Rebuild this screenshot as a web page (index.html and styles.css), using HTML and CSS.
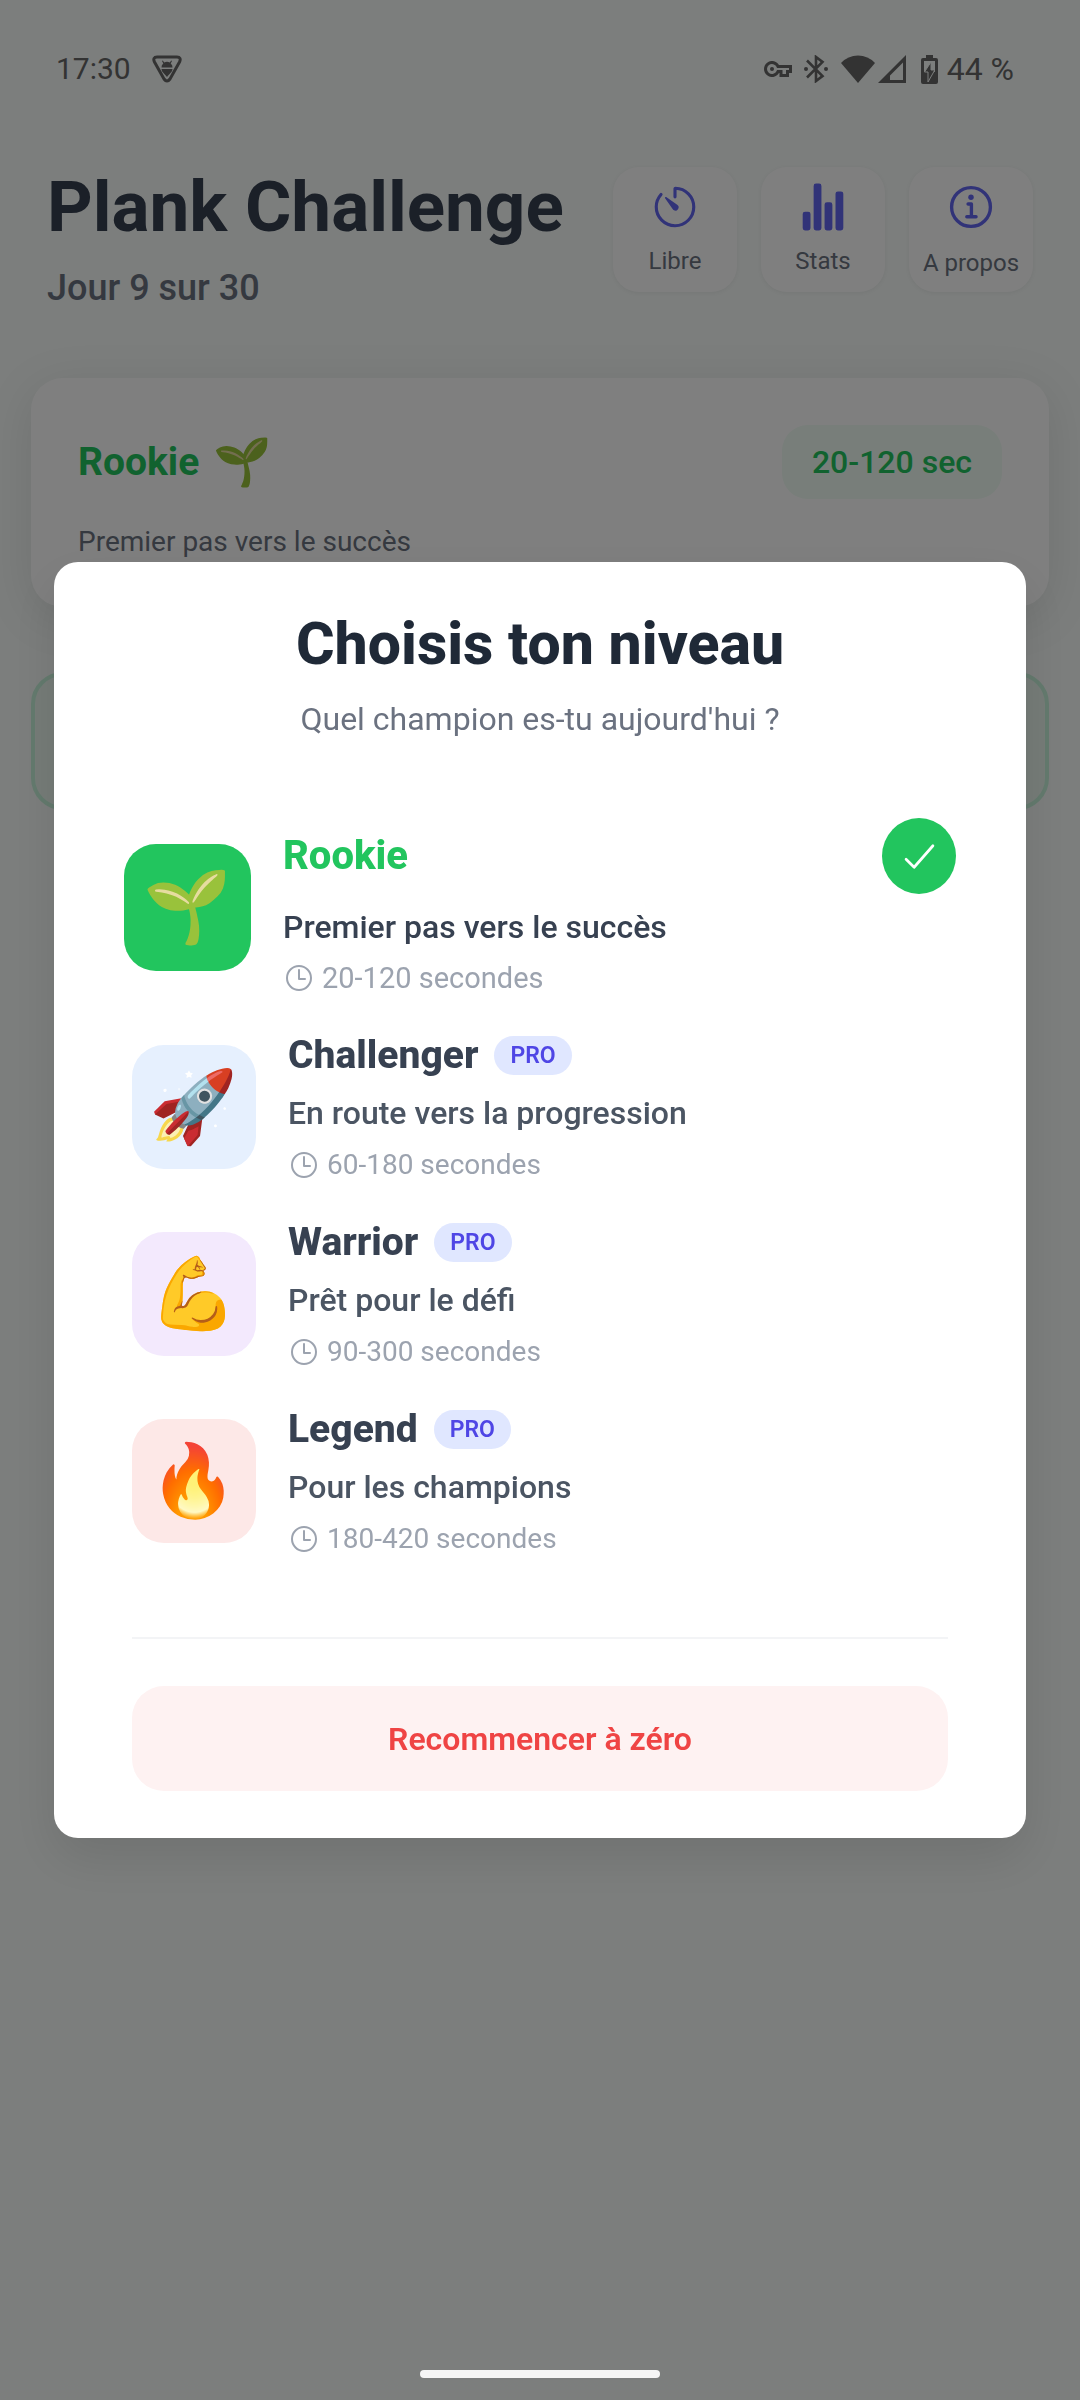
FILE: index.html
```html
<!DOCTYPE html>
<html lang="fr">
<head>
<meta charset="utf-8">
<meta name="viewport" content="width=device-width, initial-scale=1">
<title>Plank Challenge</title>
<link rel="stylesheet" href="styles.css">
</head>
<body>
<svg class="defs" aria-hidden="true">
  <symbol id="clock" viewBox="0 0 512 512"><path fill="none" stroke="currentColor" stroke-width="32" stroke-linecap="round" stroke-linejoin="round" d="M256 64C150 64 64 150 64 256s86 192 192 192 192-86 192-192S362 64 256 64zM256 128v144h96"/></symbol>
</svg>
<div class="screen">
  <div class="status">
    <span>17:30</span>
    <svg class="shield" viewBox="0 0 30 28"><path d="M5 2H25C28 2 29 4 27.500 7L18 24Q15 28 12 24L2.500 7C1 4 2 2 5 2Z" fill="none" stroke="currentColor" stroke-width="3"/><path d="M9.500 12.500a5.500 5 0 0 1 1.800-4L10 6l.8-.5L12.200 7.500a6 6 0 0 1 5.600 0L19.200 5.500l.8.500-1.300 2.500a5.500 5 0 0 1 1.800 4zM9.500 14h11c0 3-3 4.500-5.500 8-2.500-3.500-5.500-5-5.500-8z" fill="currentColor"/></svg>
    <span class="status-right">
      <svg class="s-key" viewBox="0 0 28 16" fill="none" stroke="currentColor" stroke-width="3"><path d="M14 5.500A6.500 6.500 0 1 0 14 10.500H17V14.500H23.500V10.500H26.500V5.500Z"/><circle cx="8" cy="8" r="2" fill="currentColor" stroke="none"/></svg>
      <svg class="s-bt" viewBox="0 0 24 28"><path d="M3 5.500L18.500 21 12 26V2l6.500 5L3 22.500" fill="none" stroke="currentColor" stroke-width="2.600"/><circle cx="2" cy="14" r="2" fill="currentColor"/><circle cx="22" cy="14" r="2" fill="currentColor"/></svg>
      <svg class="s-wifi" viewBox="0 0 34 28" fill="currentColor"><path d="M0 8Q7 .5 17 .5T34 8L17 28Z"/></svg>
      <svg class="s-sig" viewBox="0 0 28 28" fill="currentColor"><path d="M28 0V28H0ZM25 7.500L12 20.500V25H25Z" fill-rule="evenodd"/></svg>
      <svg class="s-bat" viewBox="0 0 17 29" fill="currentColor"><path fill-rule="evenodd" d="M5 0h7v3h3q2 0 2 2v22q0 2-2 2H2q-2 0-2-2V5q0-2 2-2h3zM3 6V17H14V6z"/><path class="bolt" d="M10 7L3.500 17H7V27L13.800 15H10z"/></svg>
      <span class="percent">44 %</span>
    </span>
  </div>

  <header class="header">
    <div class="heading">
      <h1>Plank Challenge</h1>
      <p>Jour 9 sur 30</p>
    </div>
    <nav class="tools">
      <button type="button" class="tool">
        <svg viewBox="0 0 512 512"><path fill="none" stroke="currentColor" stroke-width="32" stroke-linecap="round" stroke-linejoin="round" d="M112.910 128A191.850 191.850 0 0064 254c-1.180 106.350 85.650 193.800 192 194 106.200.2 192-85.830 192-192 0-104.540-83.550-189.610-187.500-192a4.360 4.360 0 00-4.500 4.370V152"/><path fill="currentColor" d="M233.380 278.630l-79-113a8.130 8.130 0 0111.320-11.320l113 79a32.500 32.500 0 01-37.250 53.260 33.210 33.210 0 01-8.070-7.940z"/></svg>
        <span>Libre</span>
      </button>
      <button type="button" class="tool">
        <svg viewBox="0 0 512 512" fill="currentColor"><rect x="48" y="304" width="80" height="192" rx="24"/><rect x="160" y="16" width="80" height="480" rx="24"/><rect x="272" y="208" width="80" height="288" rx="24"/><rect x="384" y="96" width="80" height="400" rx="24"/></svg>
        <span>Stats</span>
      </button>
      <button type="button" class="tool tool-info">
        <svg viewBox="-8 -8 512 512" fill="none" stroke="currentColor" stroke-linecap="round" stroke-linejoin="round"><circle cx="248" cy="248" r="184" stroke-width="32"/><path stroke-width="32" d="M220 220h32v116M208 340h88"/><circle cx="248" cy="156" r="26" fill="currentColor" stroke="none"/></svg>
        <span>A propos</span>
      </button>
    </nav>
  </header>

  <main>
    <section class="card">
      <div class="card-top">
        <h2>Rookie</h2>
        <span class="emoji emoji-small">🌱</span>
        <span class="range">20-120 sec</span>
      </div>
      <p>Premier pas vers le succès</p>
    </section>
    <section class="banner"></section>
  </main>
</div>

<div class="overlay">
  <section class="dialog" role="dialog" aria-modal="true" aria-labelledby="dialog-title">
    <h2 id="dialog-title">Choisis ton niveau</h2>
    <p class="sub">Quel champion es-tu aujourd'hui ?</p>
    <div class="levels">
      <button type="button" class="level selected" aria-pressed="true">
        <span class="tile rookie"><span class="emoji">🌱</span></span>
        <span class="info">
          <span class="name-row"><span class="name">Rookie</span><span class="check"><svg viewBox="0 0 512 512"><path fill="none" stroke="currentColor" stroke-width="32" stroke-linecap="round" stroke-linejoin="round" d="M416 128L192 384l-96-96"/></svg></span></span>
          <span class="desc">Premier pas vers le succès</span>
          <span class="time"><svg><use href="#clock"/></svg>20-120 secondes</span>
        </span>
      </button>
      <button type="button" class="level">
        <span class="tile challenger"><span class="emoji">🚀</span></span>
        <span class="info">
          <span class="name-row"><span class="name">Challenger</span><span class="pro">PRO</span></span>
          <span class="desc">En route vers la progression</span>
          <span class="time"><svg><use href="#clock"/></svg>60-180 secondes</span>
        </span>
      </button>
      <button type="button" class="level">
        <span class="tile warrior"><span class="emoji">💪</span></span>
        <span class="info">
          <span class="name-row"><span class="name">Warrior</span><span class="pro">PRO</span></span>
          <span class="desc">Prêt pour le défi</span>
          <span class="time"><svg><use href="#clock"/></svg>90-300 secondes</span>
        </span>
      </button>
      <button type="button" class="level">
        <span class="tile legend"><span class="emoji">🔥</span></span>
        <span class="info">
          <span class="name-row"><span class="name">Legend</span><span class="pro">PRO</span></span>
          <span class="desc">Pour les champions</span>
          <span class="time"><svg><use href="#clock"/></svg>180-420 secondes</span>
        </span>
      </button>
    </div>
    <div class="footer">
      <button type="button" class="reset">Recommencer à zéro</button>
    </div>
  </section>
  <div class="home-bar"></div>
</div>
</body>
</html>
```
FILE: styles.css
```css
* { box-sizing: border-box; }
body {
  margin: 0;
  background: #f8fcfa;
  font-family: Roboto, "Liberation Sans", sans-serif;
  color: #1f2937;
}
h1, h2, p { margin: 0; }
button {
  border: 0;
  padding: 0;
  background: none;
  font: inherit;
  color: inherit;
  text-align: left;
}
svg { display: block; flex: none; }
.defs { position: absolute; width: 0; height: 0; }
.emoji { font-family: "Noto Color Emoji", sans-serif; font-size: 71px; line-height: 80px; }
.emoji-small { font-size: 47px; line-height: 52px; }

.screen { min-height: 100vh; }
.status {
  display: flex;
  align-items: center;
  height: 138px;
  padding: 0 66px 0 56px;
  font-size: 30px;
  font-weight: 400;
  line-height: 40px;
  color: #666;
}
.percent { font-size: 32px; }
.shield { width: 30px; height: 28px; margin-left: 21px; }
.status-right { display: flex; align-items: center; margin-left: auto; }
.s-key { width: 28px; height: 16px; }
.s-bt { width: 24px; height: 28px; margin-left: 12px; }
.s-wifi { width: 34px; height: 28px; margin-left: 13px; }
.s-sig { width: 28px; height: 28px; margin-left: 3px; }
.s-bat { width: 17px; height: 29px; margin: 0 9px 0 15px; }
.bolt { stroke: #f8fcfa; stroke-width: 1; }

.header {
  display: flex;
  justify-content: space-between;
  align-items: flex-start;
  padding: 29px 47px 0;
}
.heading h1 { font-size: 71px; line-height: 80px; font-weight: 700; color: #374151; }
.heading p { margin-top: 19px; font-size: 36px; line-height: 44px; font-weight: 500; color: #6b7280; }
.tools { display: flex; gap: 24px; }
.tool {
  display: flex;
  flex-direction: column;
  align-items: center;
  justify-content: center;
  gap: 13px;
  width: 124px;
  height: 125px;
  border-radius: 26px;
  background: #fff;
  box-shadow: 0 1px 4px rgba(0, 0, 0, .06);
  color: #6366f1;
}
.tool svg { width: 50px; height: 50px; }
.tool-info svg { width: 54px; height: 54px; }
.tool span { font-size: 24px; line-height: 32px; color: #6b7280; }

main { padding: 68px 31px 0; }
.card {
  height: 229px;
  padding: 47px;
  border-radius: 32px;
  background: #fff;
  box-shadow: 0 10px 50px rgba(0, 0, 0, .1);
}
.card-top { display: flex; align-items: center; gap: 14px; height: 74px; }
.card h2 { font-size: 39px; line-height: 48px; color: #22c55e; }
.card p { margin-top: 25px; font-size: 28px; line-height: 36px; color: #6b7280; }
.range {
  margin-left: auto;
  padding: 0 30px;
  border-radius: 26px;
  background: #f0fdf4;
  font-size: 32px;
  line-height: 74px;
  font-weight: 500;
  color: #22c55e;
}
.banner {
  height: 138px;
  margin-top: 65px;
  border: 4px solid #c8f5dc;
  border-radius: 32px;
  background: #ecf9f1;
}

.overlay {
  position: fixed;
  inset: 0;
  display: flex;
  align-items: center;
  padding: 0 5%;
  background: rgba(0, 0, 0, .5);
}
.dialog {
  flex: 1;
  padding: 46px 78px 47px;
  border-radius: 24px;
  background: #fff;
  box-shadow: 0 20px 50px rgba(0, 0, 0, .1);
}
.dialog h2 { font-size: 59px; line-height: 72px; font-weight: 800; text-align: center; }
.sub { margin-top: 19px; font-size: 32px; line-height: 40px; text-align: center; color: #6b7280; }
.levels { display: flex; flex-direction: column; gap: 35px; margin-top: 79px; }
.level { display: flex; align-items: center; gap: 32px; }
.tile {
  display: flex;
  align-items: center;
  justify-content: center;
  flex: none;
  width: 124px;
  height: 124px;
  border-radius: 32px;
}
.rookie { background: #22c55e; }
.challenger { background: #e6f0fe; }
.warrior { background: #f3e9fd; }
.legend { background: #fde8e7; }
.info { display: flex; flex-direction: column; gap: 14px; flex: 1; }
.name-row { display: flex; align-items: center; gap: 16px; height: 48px; }
.name { font-size: 39px; line-height: 48px; font-weight: 800; color: #374151; }
.desc { font-size: 32px; line-height: 40px; font-weight: 500; color: #4b5563; }
.time { display: flex; align-items: center; gap: 7px; font-size: 28px; line-height: 36px; color: #9ca3af; }
.time svg { width: 32px; height: 32px; }
.pro {
  padding: 0 16px;
  border-radius: 20px;
  background: #e0e7ff;
  font-size: 23px;
  line-height: 39px;
  font-weight: 600;
  color: #4f46e5;
}
.selected { margin: 0 -8px; }
.selected .tile { width: 127px; height: 127px; }
.selected .info { gap: 13px; }
.selected .name-row { justify-content: space-between; height: 76px; }
.selected .name { font-size: 40px; color: #22c55e; }
.selected .desc { font-size: 32px; color: #374151; }
.selected .time { font-size: 29px; }
.check {
  display: flex;
  align-items: center;
  justify-content: center;
  width: 74px;
  height: 76px;
  border-radius: 50%;
  background: #22c55e;
  color: #fff;
}
.check svg { width: 43px; height: 43px; }
.footer { margin-top: 80px; padding-top: 47px; border-top: 2px solid #f3f4f6; }
.reset {
  width: 100%;
  height: 105px;
  border-radius: 32px;
  background: #fef2f2;
  font-size: 32px;
  font-weight: 600;
  text-align: center;
  color: #ef4444;
}
.home-bar {
  position: absolute;
  bottom: 22px;
  left: 50%;
  width: 240px;
  height: 8px;
  margin-left: -120px;
  border-radius: 4px;
  background: #f5f5f5;
}
```
